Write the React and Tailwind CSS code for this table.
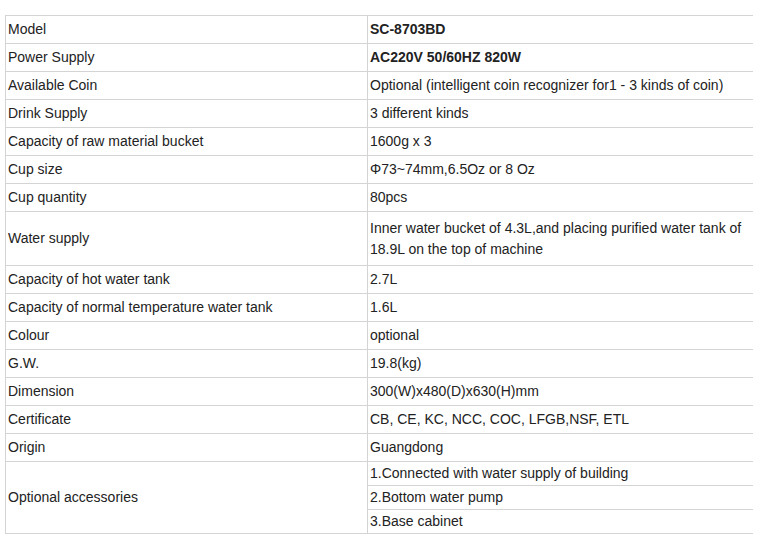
import React from "react";

const rows = [
  ["Model", "SC-8703BD", true],
  ["Power Supply", "AC220V 50/60HZ 820W", true],
  ["Available Coin", "Optional (intelligent coin recognizer for1 - 3 kinds of coin)"],
  ["Drink Supply", "3 different kinds"],
  ["Capacity of raw material bucket", "1600g x 3"],
  ["Cup size", "Φ73~74mm,6.5Oz or 8 Oz"],
  ["Cup quantity", "80pcs"],
];

const rows2 = [
  ["Capacity of hot water tank", "2.7L"],
  ["Capacity of normal temperature water tank", "1.6L"],
  ["Colour", "optional"],
  ["G.W.", "19.8(kg)"],
  ["Dimension", "300(W)x480(D)x630(H)mm"],
  ["Certificate", "CB, CE, KC, NCC, COC, LFGB,NSF, ETL"],
  ["Origin", "Guangdong"],
];

function Row({ label, value, bold }) {
  return (
    <div className="flex h-[28px] border-b border-[#d4d4d4]">
      <div className="w-[362px] shrink-0 border-r border-[#d4d4d4] pl-[2px] flex items-center">{label}</div>
      <div className={"pl-[2px] flex items-center " + (bold ? "font-bold" : "")}>{value}</div>
    </div>
  );
}

export default function App() {
  return (
    <div className="w-[760px] h-[540px] bg-white pt-[15px] pl-[5px] text-[14px] text-[#222] leading-[21px]" style={{ fontFamily: '"Liberation Sans", Arial, sans-serif' }}>
      <div className="w-[748px] border-t border-l border-[#d4d4d4]">
        {rows.map(([l, v, b]) => (
          <Row key={l} label={l} value={v} bold={b} />
        ))}
        <div className="flex h-[54px] border-b border-[#d4d4d4]">
          <div className="w-[362px] shrink-0 border-r border-[#d4d4d4] pl-[2px] flex items-center">Water supply</div>
          <div className="pl-[2px] pr-[4px] flex items-center">Inner water bucket of 4.3L,and placing purified water tank of 18.9L on the top of machine</div>
        </div>
        {rows2.map(([l, v]) => (
          <Row key={l} label={l} value={v} />
        ))}
        <div className="flex h-[72px] border-b border-[#d4d4d4]">
          <div className="w-[362px] shrink-0 border-r border-[#d4d4d4] pl-[2px] flex items-center">Optional accessories</div>
          <div className="flex-1 flex flex-col">
            <div className="h-[24px] border-b border-[#d4d4d4] pl-[2px] flex items-center">1.Connected with water supply of building</div>
            <div className="h-[24px] border-b border-[#d4d4d4] pl-[2px] flex items-center">2.Bottom water pump</div>
            <div className="flex-1 pl-[2px] flex items-center">3.Base cabinet</div>
          </div>
        </div>
      </div>
    </div>
  );
}
